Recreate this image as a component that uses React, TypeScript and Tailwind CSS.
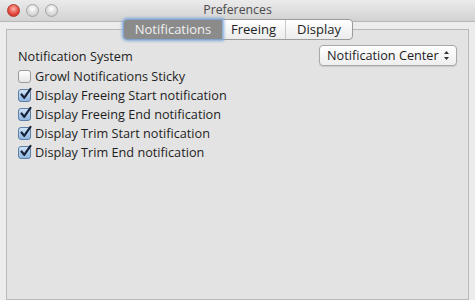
const CheckBox = ({ checked }: { checked: boolean }) => (
  <span
    className={
      "flex h-[13px] w-[13px] shrink-0 items-center justify-center rounded-[3px] border " +
      (checked
        ? "border-[#5b7fa6] bg-gradient-to-b from-[#cfe3f7] to-[#8fb6de]"
        : "border-[#9a9a9a] bg-gradient-to-b from-[#ffffff] to-[#e6e6e6]")
    }
  >
    {checked && (
      <svg width="13" height="13" viewBox="0 0 13 13" className="-mt-[2px] ml-[1px] overflow-visible">
        <path d="M2.5 6.5 L5.2 9.8 L11.5 0.8" fill="none" stroke="#16233a" strokeWidth="2.2" strokeLinecap="round" strokeLinejoin="round" />
      </svg>
    )}
  </span>
);

const options = [
  { label: "Growl Notifications Sticky", checked: false },
  { label: "Display Freeing Start notification", checked: true },
  { label: "Display Freeing End notification", checked: true },
  { label: "Display Trim Start notification", checked: true },
  { label: "Display Trim End notification", checked: true },
];

export default function App() {
  return (
    <div
      className="flex h-[300px] w-[475px] flex-col overflow-hidden bg-[#e3e3e3] text-[12.7px] text-[#1e1e1e]"
      style={{ fontFamily: '"Open Sans", sans-serif' }}
    >
      {/* title bar */}
      <div className="relative flex h-[22px] shrink-0 items-center justify-center bg-gradient-to-b from-[#ebebeb] to-[#d2d2d2] border-b border-[#b5b5b5]">
        <div className="absolute left-[7px] top-[4px] flex gap-[6px]">
          <span className="h-[13px] w-[13px] rounded-full border border-[#b23a33] bg-[radial-gradient(circle_at_50%_35%,#ffb3a8,#e2463a_60%,#b82c22)]" />
          <span className="h-[13px] w-[13px] rounded-full border border-[#a3a3a3] bg-[radial-gradient(circle_at_50%_35%,#ffffff,#d8d8d8_60%,#bdbdbd)]" />
          <span className="h-[13px] w-[13px] rounded-full border border-[#a3a3a3] bg-[radial-gradient(circle_at_50%_35%,#ffffff,#d8d8d8_60%,#bdbdbd)]" />
        </div>
        <span className="text-[12.3px] text-[#4a4a4a]">Preferences</span>
      </div>

      {/* tab box */}
      <div className="flex flex-1 flex-col bg-[#ececec] px-[6px] pt-[7px]">
        <div className="relative flex flex-1 flex-col border border-[#b9b9b9] bg-[#e3e3e3]">
          <div className="absolute left-[116px] top-[-11px] flex h-[21px] items-stretch rounded-[4px] border border-[#9c9c9c] bg-gradient-to-b from-[#ffffff] to-[#ececec] text-[13px]">
            <div className="flex w-[98px] items-center justify-center rounded-l-[3px] bg-[#8b8b8b] text-[#f0f0f0] shadow-[0_0_3px_2px_#7fa8d8]">
              Notifications
            </div>
            <div className="flex w-[64px] items-center justify-center border-r border-[#c8c8c8] text-[#222]">
              Freeing
            </div>
            <div className="flex w-[66px] items-center justify-center text-[#222]">Display</div>
          </div>

          <div className="flex items-center justify-between pl-[11px] pr-[11px] pt-[14px]">
            <span className="pt-[3px]">Notification System</span>
            <div className="flex h-[21px] w-[138px] items-center justify-between rounded-[4px] border border-[#a8a8a8] bg-gradient-to-b from-[#ffffff] to-[#eeeeee] pl-[7px] pr-[6px] shadow-[0_1px_1px_rgba(0,0,0,0.12)]">
              <span>Notification Center</span>
              <svg width="7" height="11" viewBox="0 0 7 11">
                <path d="M1 4 L3.5 1 L6 4 Z M1 7 L3.5 10 L6 7 Z" fill="#333" />
              </svg>
            </div>
          </div>

          <div className="flex flex-col gap-[6px] pl-[11px] pt-[4px]">
            {options.map((o) => (
              <label key={o.label} className="flex h-[13px] items-center gap-[4px]">
                <CheckBox checked={o.checked} />
                <span>{o.label}</span>
              </label>
            ))}
          </div>
        </div>
      </div>
    </div>
  );
}
